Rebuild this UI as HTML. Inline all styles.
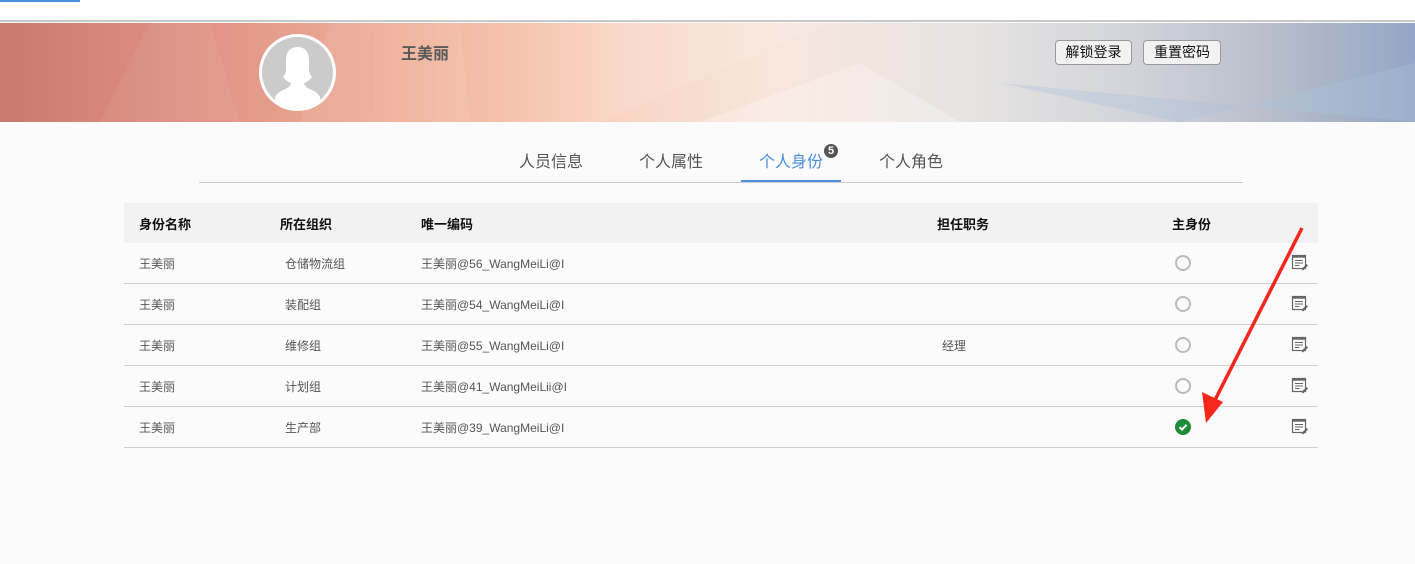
<!DOCTYPE html>
<html><head><meta charset="utf-8"><style>
*{margin:0;padding:0;box-sizing:border-box}
body{width:1415px;height:564px;overflow:hidden;background:#fbfbfb;font-family:"Liberation Sans","Noto Sans CJK SC",sans-serif;position:relative}
.top{position:absolute;left:0;top:0;width:1415px;height:22px;background:#fff;border-bottom:2px solid #c8c8c8}
.banner{position:absolute;left:0;top:23px;width:1415px;height:99px;background:linear-gradient(90deg,#c97a6e 0%,#e29486 15%,#f0b49c 30%,#f9d2bf 42%,#f8e6dc 55%,#e7e4e2 68%,#d2d4da 80%,#b7bdca 90%,#94a6c6 100%);overflow:hidden}
.abs{position:absolute}
.btn{position:absolute;top:17px;height:25px;border:1px solid #999;border-radius:4px;background:#f2f2f2;font-size:14px;line-height:23px;text-align:center;color:#111}
.tab{position:absolute;top:148px;font-size:16px;color:#555}
.th{position:absolute;font-size:13px;font-weight:bold;color:#111;top:214px}
.td{position:absolute;font-size:12px;color:#555}
.row{position:absolute;left:124px;width:1194px;height:1px;background:#d0d0d0}
.circ{position:absolute;left:1175px;width:16px;height:16px;border:2px solid #bbb;border-radius:50%}
</style></head><body>
<div class="top"><div class="abs" style="left:0;top:0;width:80px;height:2px;background:#4a8fe0"></div></div>
<div class="banner">
<svg class="abs" style="left:0;top:0" width="1415" height="99"><polygon points="150,0 210,0 240,99 100,99" fill="#fff" opacity=".05"/><polygon points="330,0 460,0 470,99 300,99" fill="#fff" opacity=".08"/><polygon points="600,0 830,0 600,99" fill="#fff" opacity=".1"/><polygon points="860,40 700,99 960,99" fill="#fff" opacity=".25"/><polygon points="1000,60 1180,99 1415,40 1415,99" fill="#a9c4dc" opacity=".35"/></svg>
<div class="abs" style="left:259px;top:11px;width:77px;height:77px;border-radius:50%;background:#fff"></div>
<div class="abs" style="left:262px;top:14px;width:71px;height:71px;border-radius:50%;background:#cbcbcb;overflow:hidden">
<svg width="71" height="71"><path d="M24 22 Q25 10 35.5 10 Q46 10 47 22 L47 32 Q47 37 50 40 Q46 45 42 46 Q42 50 50 53 Q56 56 58 60 L58 71 L13 71 L13 60 Q15 56 21 53 Q29 50 29 46 Q25 45 21 40 Q24 37 24 32 Z" fill="#fff"/></svg></div>
<div class="abs" style="left:371px;top:11px;width:1px;height:77px;background:#d8b2a0"></div>
<div class="abs" style="left:401px;top:17px;font-size:16px;font-weight:bold;color:#5a5a5a">王美丽</div>
<div class="btn" style="left:1055px;width:77px">解锁登录</div>
<div class="btn" style="left:1143px;width:78px">重置密码</div>
</div>
<div class="abs" style="left:199px;top:182px;width:1044px;height:1px;background:#ccc"></div>
<div class="tab" style="left:519px">人员信息</div>
<div class="tab" style="left:639px">个人属性</div>
<div class="tab" style="left:759px;color:#4a8fe0">个人身份</div>
<div class="abs" style="left:824px;top:144px;width:14px;height:14px;border-radius:50%;background:#555;color:#fff;font-size:11px;font-weight:bold;text-align:center;line-height:14px">5</div>
<div class="tab" style="left:879px">个人角色</div>
<div class="abs" style="left:741px;top:180px;width:100px;height:2px;background:#4a8fe0"></div>
<div class="abs" style="left:124px;top:203px;width:1194px;height:40px;background:#f2f2f2"></div>
<div class="th" style="left:139px">身份名称</div><div class="th" style="left:280px">所在组织</div><div class="th" style="left:421px">唯一编码</div><div class="th" style="left:937px">担任职务</div><div class="th" style="left:1172px">主身份</div>
<div class="row" style="top:283px"></div><div class="row" style="top:324px"></div><div class="row" style="top:365px"></div><div class="row" style="top:406px"></div><div class="row" style="top:447px"></div>
<div class="td" style="left:139px;top:255px">王美丽</div><div class="td" style="left:285px;top:255px">仓储物流组</div><div class="td" style="left:421px;top:255px">王美丽@56_WangMeiLi@I</div>
<div class="td" style="left:139px;top:296px">王美丽</div><div class="td" style="left:285px;top:296px">装配组</div><div class="td" style="left:421px;top:296px">王美丽@54_WangMeiLi@I</div>
<div class="td" style="left:139px;top:337px">王美丽</div><div class="td" style="left:285px;top:337px">维修组</div><div class="td" style="left:421px;top:337px">王美丽@55_WangMeiLi@I</div><div class="td" style="left:942px;top:337px">经理</div>
<div class="td" style="left:139px;top:378px">王美丽</div><div class="td" style="left:285px;top:378px">计划组</div><div class="td" style="left:421px;top:378px">王美丽@41_WangMeiLii@I</div>
<div class="td" style="left:139px;top:419px">王美丽</div><div class="td" style="left:285px;top:419px">生产部</div><div class="td" style="left:421px;top:419px">王美丽@39_WangMeiLi@I</div>
<div class="circ" style="top:255px"></div><div class="circ" style="top:296px"></div><div class="circ" style="top:337px"></div><div class="circ" style="top:378px"></div>
<svg class="abs" style="left:1175px;top:419px" width="16" height="16"><circle cx="8" cy="8" r="8" fill="#1e8a3a"/><path d="M4.5 8.2 L7 10.6 L11.5 5.8" stroke="#fff" stroke-width="2" fill="none"/></svg>
<svg class="abs" style="left:0;top:0;pointer-events:none" width="1415" height="564">
<defs><g id="ed"><rect x="0.5" y="0.5" width="13" height="13" fill="#fff" stroke="#666" stroke-width="1.2"/><rect x="0.5" y="0.5" width="13" height="2.2" fill="#666"/><path d="M3 5.5h8M3 8h8M3 10.5h4.5" stroke="#666"/><path d="M9.5 14 L14.5 9 L16 10.5 L11 15.5 Z" fill="#666"/></g></defs>
<use href="#ed" x="1292" y="255"/><use href="#ed" x="1292" y="296"/><use href="#ed" x="1292" y="337"/><use href="#ed" x="1292" y="378"/><use href="#ed" x="1292" y="419"/>
<path d="M1302 228 L1215 400" stroke="#f5261c" stroke-width="3.5"/><polygon points="1206,423 1202,392 1223,402" fill="#f5261c"/>
</svg>
</body></html>
